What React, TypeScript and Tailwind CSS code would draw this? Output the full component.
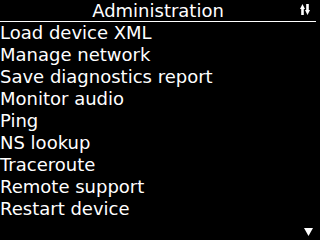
const items = [
  "Load device XML",
  "Manage network",
  "Save diagnostics report",
  "Monitor audio",
  "Ping",
  "NS lookup",
  "Traceroute",
  "Remote support",
  "Restart device",
];

export default function App() {
  return (
    <div className="relative w-[320px] h-[240px] bg-black text-white overflow-hidden font-['DejaVu_Sans',sans-serif]">
      {/* Title bar */}
      <div className="relative h-[22px] border-b border-white mr-[4px] flex items-center justify-center">
        <span className="text-[18px] leading-[22px]">Administration</span>
        <svg className="absolute right-[6px] top-[4px]" width="10" height="11" viewBox="0 0 10 11">
          <polygon points="2.5,0 5,5 3.8,5 3.8,11 1.2,11 1.2,5 0,5" fill="white" />
          <polygon points="7.5,11 10,6 8.8,6 8.8,0 6.2,0 6.2,6 5,6" fill="white" />
        </svg>
      </div>

      {/* Menu */}
      <div className="flex flex-col">
        {items.map((item) => (
          <div key={item} className="h-[22px] flex items-center text-[18px] leading-[22px]">
            {item}
          </div>
        ))}
      </div>

      <svg className="absolute right-[7px] bottom-[4px]" width="9" height="8" viewBox="0 0 9 8">
        <polygon points="0,0 9,0 4.5,8" fill="white" />
      </svg>
    </div>
  );
}
